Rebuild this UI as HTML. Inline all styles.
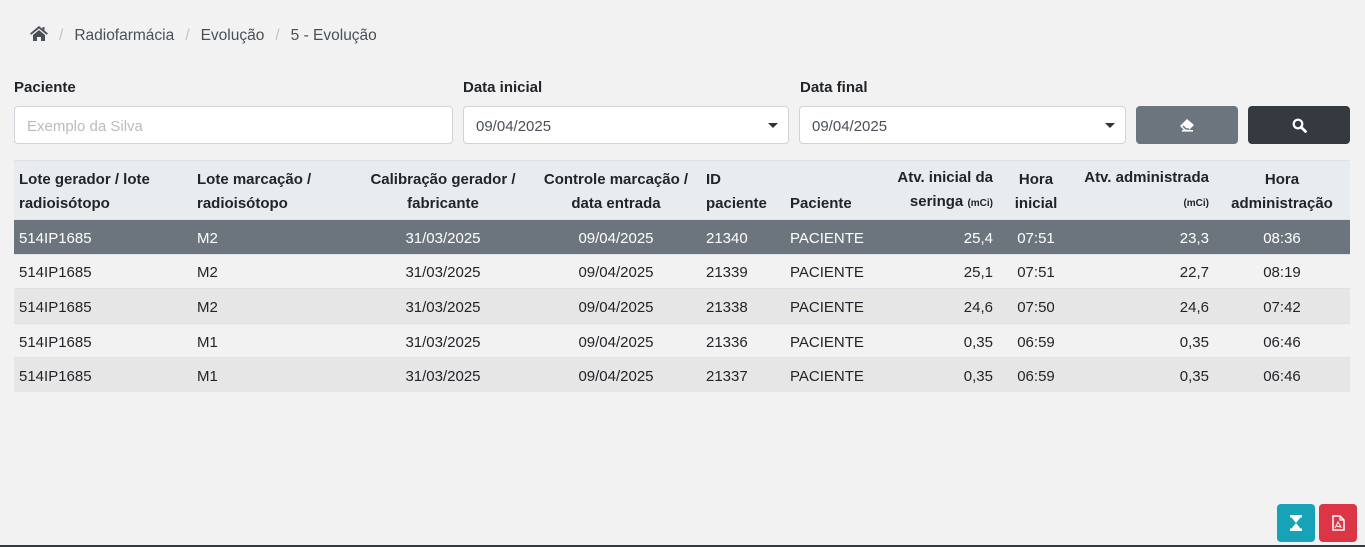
<!DOCTYPE html>
<html><head><meta charset="utf-8"><style>
*{box-sizing:border-box;margin:0;padding:0}
body{width:1365px;height:547px;background:#f2f2f2;font-family:"Liberation Sans",sans-serif;font-size:15px;color:#212529;position:relative;overflow:hidden}
.abs{position:absolute}
.bc{top:26px;left:30px;color:#495057;font-size:15.5px;white-space:nowrap}
.bc .s{color:#c0c4c8;margin:0 11px}
.lbl{font-weight:bold;font-size:15px;top:79px;color:#212529}
.inp{top:106px;height:38px;background:#fff;border:1px solid #ced4da;border-radius:4px;padding:0 12px;line-height:39px;color:#495057}
.caret{position:absolute;right:10px;top:16px;width:0;height:0;border-left:5px solid transparent;border-right:5px solid transparent;border-top:5px solid #333}
.btn{top:106px;height:38px;border-radius:4px;display:flex;align-items:center;justify-content:center}
table{position:absolute;left:14px;top:160px;width:1336px;border-collapse:collapse;table-layout:fixed}
th{background:#e9ecef;font-weight:bold;vertical-align:bottom;line-height:24px;padding:3px 5px 3px;height:59px;border-top:1px solid #dee2e6;color:#212529}
td{height:34.6px;padding:3px 5px 0;border-top:1px solid #dee2e6;white-space:nowrap}
.c{text-align:center}.r{text-align:right}
tr.sel td{background:#6c757d;color:#fff}
tr.odd td{background:#e6e6e6}
small{font-size:10px}
</style></head><body>
<div class="abs bc"><svg width="18" height="15" viewBox="0 0 18 15" style="vertical-align:-1px"><path d="M9 0 L0 7.5 L1.3 8.8 L9 2.5 L16.7 8.8 L18 7.5 L14.5 4.6 V1 H12.5 V3 Z" fill="#495057"/><path d="M3 9 L9 4 L15 9 V15 H11 V11 H7 V15 H3 Z" fill="#495057"/></svg><span class="s">/</span>Radiofarmácia<span class="s">/</span>Evolução<span class="s">/</span>5 - Evolução</div>
<div class="abs lbl" style="left:14px">Paciente</div>
<div class="abs lbl" style="left:463px">Data inicial</div>
<div class="abs lbl" style="left:800px">Data final</div>
<div class="abs inp" style="left:14px;width:439px;color:#b8bcc0">Exemplo da Silva</div>
<div class="abs inp" style="left:463px;width:326px">09/04/2025<span class="caret"></span></div>
<div class="abs inp" style="left:799px;width:327px">09/04/2025<span class="caret"></span></div>
<div class="abs btn" style="left:1136px;width:102px;background:#6c757d"><svg width="16" height="14" viewBox="0 0 16 14"><path d="M8 1 L15 7 L10 12 H5 L1 8 Z" fill="#fff"/><path d="M4 8 L7 11 H10" stroke="#6c757d" stroke-width="1.5" fill="none"/><rect x="3" y="12" width="11" height="1.6" fill="#fff"/></svg></div>
<div class="abs btn" style="left:1248px;width:102px;background:#343a40"><svg width="15" height="15" viewBox="0 0 15 15"><circle cx="6" cy="6" r="4.3" stroke="#fff" stroke-width="2.2" fill="none"/><path d="M9 9 L13.5 13.5" stroke="#fff" stroke-width="2.8" stroke-linecap="round"/></svg></div>
<table>
<colgroup><col style="width:178px"><col style="width:163px"><col style="width:176px"><col style="width:170px"><col style="width:84px"><col style="width:85px"><col style="width:128px"><col style="width:76px"><col style="width:140px"><col style="width:136px"></colgroup>
<tr><th style="text-align:left">Lote gerador / lote radioisótopo</th><th style="text-align:left">Lote marcação / radioisótopo</th><th class="c">Calibração gerador / fabricante</th><th class="c">Controle marcação / data entrada</th><th style="text-align:left">ID paciente</th><th style="text-align:left">Paciente</th><th class="r">Atv. inicial da seringa <small>(mCi)</small></th><th class="c">Hora inicial</th><th class="r">Atv. administrada<br><small>(mCi)</small></th><th class="c">Hora administração</th></tr>
<tr class="sel"><td>514IP1685</td><td>M2</td><td class="c">31/03/2025</td><td class="c">09/04/2025</td><td>21340</td><td>PACIENTE</td><td class="r">25,4</td><td class="c">07:51</td><td class="r">23,3</td><td class="c">08:36</td></tr>
<tr><td>514IP1685</td><td>M2</td><td class="c">31/03/2025</td><td class="c">09/04/2025</td><td>21339</td><td>PACIENTE</td><td class="r">25,1</td><td class="c">07:51</td><td class="r">22,7</td><td class="c">08:19</td></tr>
<tr class="odd"><td>514IP1685</td><td>M2</td><td class="c">31/03/2025</td><td class="c">09/04/2025</td><td>21338</td><td>PACIENTE</td><td class="r">24,6</td><td class="c">07:50</td><td class="r">24,6</td><td class="c">07:42</td></tr>
<tr><td>514IP1685</td><td>M1</td><td class="c">31/03/2025</td><td class="c">09/04/2025</td><td>21336</td><td>PACIENTE</td><td class="r">0,35</td><td class="c">06:59</td><td class="r">0,35</td><td class="c">06:46</td></tr>
<tr class="odd"><td>514IP1685</td><td>M1</td><td class="c">31/03/2025</td><td class="c">09/04/2025</td><td>21337</td><td>PACIENTE</td><td class="r">0,35</td><td class="c">06:59</td><td class="r">0,35</td><td class="c">06:46</td></tr>
</table>
<div class="abs" style="left:1277px;top:504px;width:38px;height:38px;background:#17a2b8;border-radius:4px;display:flex;align-items:center;justify-content:center"><svg width="12" height="16" viewBox="0 0 12 16"><rect x="0" y="0" width="12" height="2.5" fill="#fff"/><rect x="0" y="13.5" width="12" height="2.5" fill="#fff"/><path d="M1.5 2.5 H10.5 L6 8 L10.5 13.5 H1.5 L6 8 Z" fill="#fff"/></svg></div>
<div class="abs" style="left:1319px;top:504px;width:38px;height:38px;background:#dc3545;border-radius:4px;display:flex;align-items:center;justify-content:center"><svg width="13" height="16" viewBox="0 0 13 16"><path d="M1 1 H8 L12 5 V15 H1 Z" fill="none" stroke="#fff" stroke-width="1.5"/><path d="M8 1 V5 H12" fill="none" stroke="#fff" stroke-width="1.2"/><path d="M3 13 L6 7 L9 12 L4 11" fill="none" stroke="#fff" stroke-width="1"/></svg></div>
<div class="abs" style="left:0;top:545px;width:1365px;height:2px;background:#343a40"></div>
</body></html>
